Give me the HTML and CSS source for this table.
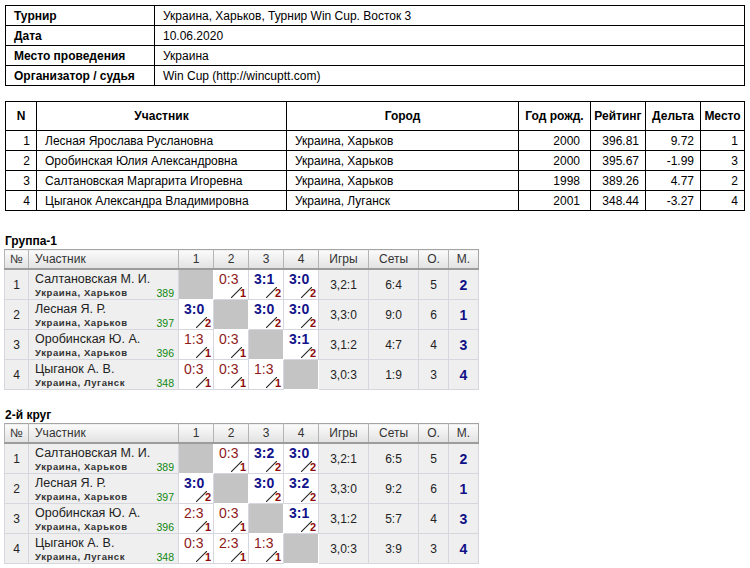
FILE: index.html
```html
<!DOCTYPE html>
<html lang="ru">
<head>
<meta charset="utf-8">
<title>Турнир Win Cup. Восток 3</title>
<link rel="stylesheet" href="styles.css">
</head>
<body>
<table class="info">
  <tr><th>Турнир</th><td>Украина, Харьков, Турнир Win Cup. Восток 3</td></tr>
  <tr><th>Дата</th><td>10.06.2020</td></tr>
  <tr><th>Место проведения</th><td>Украина</td></tr>
  <tr><th>Организатор / судья</th><td>Win Cup (http://wincuptt.com)</td></tr>
</table>

<table class="plist">
  <colgroup><col class="c-n"><col class="c-name"><col class="c-city"><col class="c-year"><col class="c-rt"><col class="c-dl"><col class="c-pl"></colgroup>
  <tr><th>N</th><th>Участник</th><th>Город</th><th>Год рожд.</th><th>Рейтинг</th><th>Дельта</th><th>Место</th></tr>
  <tr><td class="r">1</td><td>Лесная Ярослава Руслановна</td><td>Украина, Харьков</td><td class="r yr">2000</td><td class="r">396.81</td><td class="r">9.72</td><td class="r">1</td></tr>
  <tr><td class="r">2</td><td>Оробинская Юлия Александровна</td><td>Украина, Харьков</td><td class="r yr">2000</td><td class="r">395.67</td><td class="r">-1.99</td><td class="r">3</td></tr>
  <tr><td class="r">3</td><td>Салтановская Маргарита Игоревна</td><td>Украина, Харьков</td><td class="r yr">1998</td><td class="r">389.26</td><td class="r">4.77</td><td class="r">2</td></tr>
  <tr><td class="r">4</td><td>Цыганок Александра Владимировна</td><td>Украина, Луганск</td><td class="r yr">2001</td><td class="r">348.44</td><td class="r">-3.27</td><td class="r">4</td></tr>
</table>

<section class="group">
  <h3>Группа-1</h3>
  <table class="grid">
    <colgroup><col class="g-n"><col class="g-name"><col class="g-s"><col class="g-s"><col class="g-s"><col class="g-s"><col class="g-w"><col class="g-w"><col class="g-o"><col class="g-o"></colgroup>
    <tr class="hd"><th>№</th><th class="l">Участник</th><th>1</th><th>2</th><th>3</th><th>4</th><th>Игры</th><th>Сеты</th><th>О.</th><th>М.</th></tr>
    <tr>
      <td>1</td>
      <td class="nm"><div class="nmw"><span class="pn">Салтановская М. И.</span><span class="sub"><span class="ct">Украина, Харьков</span><span class="rt">389</span></span></div></td>
      <td class="x"></td>
      <td class="sc"><div class="scw"><span class="s lo">0:3</span><span class="pt"><svg viewBox="0 0 10 10"><line x1="0" y1="10" x2="10" y2="0"/></svg><b>1</b></span></div></td>
      <td class="sc"><div class="scw"><span class="s wn">3:1</span><span class="pt"><svg viewBox="0 0 10 10"><line x1="0" y1="10" x2="10" y2="0"/></svg><b>2</b></span></div></td>
      <td class="sc"><div class="scw"><span class="s wn">3:0</span><span class="pt"><svg viewBox="0 0 10 10"><line x1="0" y1="10" x2="10" y2="0"/></svg><b>2</b></span></div></td>
      <td>3,2:1</td><td>6:4</td><td>5</td><td class="pl">2</td>
    </tr>
    <tr>
      <td>2</td>
      <td class="nm"><div class="nmw"><span class="pn">Лесная Я. Р.</span><span class="sub"><span class="ct">Украина, Харьков</span><span class="rt">397</span></span></div></td>
      <td class="sc"><div class="scw"><span class="s wn">3:0</span><span class="pt"><svg viewBox="0 0 10 10"><line x1="0" y1="10" x2="10" y2="0"/></svg><b>2</b></span></div></td>
      <td class="x"></td>
      <td class="sc"><div class="scw"><span class="s wn">3:0</span><span class="pt"><svg viewBox="0 0 10 10"><line x1="0" y1="10" x2="10" y2="0"/></svg><b>2</b></span></div></td>
      <td class="sc"><div class="scw"><span class="s wn">3:0</span><span class="pt"><svg viewBox="0 0 10 10"><line x1="0" y1="10" x2="10" y2="0"/></svg><b>2</b></span></div></td>
      <td>3,3:0</td><td>9:0</td><td>6</td><td class="pl">1</td>
    </tr>
    <tr>
      <td>3</td>
      <td class="nm"><div class="nmw"><span class="pn">Оробинская Ю. А.</span><span class="sub"><span class="ct">Украина, Харьков</span><span class="rt">396</span></span></div></td>
      <td class="sc"><div class="scw"><span class="s lo">1:3</span><span class="pt"><svg viewBox="0 0 10 10"><line x1="0" y1="10" x2="10" y2="0"/></svg><b>1</b></span></div></td>
      <td class="sc"><div class="scw"><span class="s lo">0:3</span><span class="pt"><svg viewBox="0 0 10 10"><line x1="0" y1="10" x2="10" y2="0"/></svg><b>1</b></span></div></td>
      <td class="x"></td>
      <td class="sc"><div class="scw"><span class="s wn">3:1</span><span class="pt"><svg viewBox="0 0 10 10"><line x1="0" y1="10" x2="10" y2="0"/></svg><b>2</b></span></div></td>
      <td>3,1:2</td><td>4:7</td><td>4</td><td class="pl">3</td>
    </tr>
    <tr>
      <td>4</td>
      <td class="nm"><div class="nmw"><span class="pn">Цыганок А. В.</span><span class="sub"><span class="ct">Украина, Луганск</span><span class="rt">348</span></span></div></td>
      <td class="sc"><div class="scw"><span class="s lo">0:3</span><span class="pt"><svg viewBox="0 0 10 10"><line x1="0" y1="10" x2="10" y2="0"/></svg><b>1</b></span></div></td>
      <td class="sc"><div class="scw"><span class="s lo">0:3</span><span class="pt"><svg viewBox="0 0 10 10"><line x1="0" y1="10" x2="10" y2="0"/></svg><b>1</b></span></div></td>
      <td class="sc"><div class="scw"><span class="s lo">1:3</span><span class="pt"><svg viewBox="0 0 10 10"><line x1="0" y1="10" x2="10" y2="0"/></svg><b>1</b></span></div></td>
      <td class="x"></td>
      <td>3,0:3</td><td>1:9</td><td>3</td><td class="pl">4</td>
    </tr>
  </table>
</section>

<section class="group">
  <h3>2-й круг</h3>
  <table class="grid">
    <colgroup><col class="g-n"><col class="g-name"><col class="g-s"><col class="g-s"><col class="g-s"><col class="g-s"><col class="g-w"><col class="g-w"><col class="g-o"><col class="g-o"></colgroup>
    <tr class="hd"><th>№</th><th class="l">Участник</th><th>1</th><th>2</th><th>3</th><th>4</th><th>Игры</th><th>Сеты</th><th>О.</th><th>М.</th></tr>
    <tr>
      <td>1</td>
      <td class="nm"><div class="nmw"><span class="pn">Салтановская М. И.</span><span class="sub"><span class="ct">Украина, Харьков</span><span class="rt">389</span></span></div></td>
      <td class="x"></td>
      <td class="sc"><div class="scw"><span class="s lo">0:3</span><span class="pt"><svg viewBox="0 0 10 10"><line x1="0" y1="10" x2="10" y2="0"/></svg><b>1</b></span></div></td>
      <td class="sc"><div class="scw"><span class="s wn">3:2</span><span class="pt"><svg viewBox="0 0 10 10"><line x1="0" y1="10" x2="10" y2="0"/></svg><b>2</b></span></div></td>
      <td class="sc"><div class="scw"><span class="s wn">3:0</span><span class="pt"><svg viewBox="0 0 10 10"><line x1="0" y1="10" x2="10" y2="0"/></svg><b>2</b></span></div></td>
      <td>3,2:1</td><td>6:5</td><td>5</td><td class="pl">2</td>
    </tr>
    <tr>
      <td>2</td>
      <td class="nm"><div class="nmw"><span class="pn">Лесная Я. Р.</span><span class="sub"><span class="ct">Украина, Харьков</span><span class="rt">397</span></span></div></td>
      <td class="sc"><div class="scw"><span class="s wn">3:0</span><span class="pt"><svg viewBox="0 0 10 10"><line x1="0" y1="10" x2="10" y2="0"/></svg><b>2</b></span></div></td>
      <td class="x"></td>
      <td class="sc"><div class="scw"><span class="s wn">3:0</span><span class="pt"><svg viewBox="0 0 10 10"><line x1="0" y1="10" x2="10" y2="0"/></svg><b>2</b></span></div></td>
      <td class="sc"><div class="scw"><span class="s wn">3:2</span><span class="pt"><svg viewBox="0 0 10 10"><line x1="0" y1="10" x2="10" y2="0"/></svg><b>2</b></span></div></td>
      <td>3,3:0</td><td>9:2</td><td>6</td><td class="pl">1</td>
    </tr>
    <tr>
      <td>3</td>
      <td class="nm"><div class="nmw"><span class="pn">Оробинская Ю. А.</span><span class="sub"><span class="ct">Украина, Харьков</span><span class="rt">396</span></span></div></td>
      <td class="sc"><div class="scw"><span class="s lo">2:3</span><span class="pt"><svg viewBox="0 0 10 10"><line x1="0" y1="10" x2="10" y2="0"/></svg><b>1</b></span></div></td>
      <td class="sc"><div class="scw"><span class="s lo">0:3</span><span class="pt"><svg viewBox="0 0 10 10"><line x1="0" y1="10" x2="10" y2="0"/></svg><b>1</b></span></div></td>
      <td class="x"></td>
      <td class="sc"><div class="scw"><span class="s wn">3:1</span><span class="pt"><svg viewBox="0 0 10 10"><line x1="0" y1="10" x2="10" y2="0"/></svg><b>2</b></span></div></td>
      <td>3,1:2</td><td>5:7</td><td>4</td><td class="pl">3</td>
    </tr>
    <tr>
      <td>4</td>
      <td class="nm"><div class="nmw"><span class="pn">Цыганок А. В.</span><span class="sub"><span class="ct">Украина, Луганск</span><span class="rt">348</span></span></div></td>
      <td class="sc"><div class="scw"><span class="s lo">0:3</span><span class="pt"><svg viewBox="0 0 10 10"><line x1="0" y1="10" x2="10" y2="0"/></svg><b>1</b></span></div></td>
      <td class="sc"><div class="scw"><span class="s lo">2:3</span><span class="pt"><svg viewBox="0 0 10 10"><line x1="0" y1="10" x2="10" y2="0"/></svg><b>1</b></span></div></td>
      <td class="sc"><div class="scw"><span class="s lo">1:3</span><span class="pt"><svg viewBox="0 0 10 10"><line x1="0" y1="10" x2="10" y2="0"/></svg><b>1</b></span></div></td>
      <td class="x"></td>
      <td>3,0:3</td><td>3:9</td><td>3</td><td class="pl">4</td>
    </tr>
  </table>
</section>
</body>
</html>
```

FILE: styles.css
```css
html, body {
  margin: 0;
  padding: 0;
  background: #fff;
}
body {
  padding: 5px 5px 0 5px;
  font-family: "Liberation Sans", Arial, sans-serif;
  font-size: 12px;
  color: #000;
}
table {
  border-collapse: collapse;
}
.info {
  width: 740px;
  margin-bottom: 15px;
}
.info th, .info td {
  border: 1px solid #000;
  height: 19px;
  padding: 0 6px 0 8px;
  text-align: left;
  white-space: nowrap;
}
.info th {
  width: 134px;
  font-weight: bold;
}
.plist {
  width: 740px;
}
.plist th, .plist td {
  border: 1px solid #000;
  padding: 0 8px;
  white-space: nowrap;
}
.plist th {
  height: 28px;
  font-weight: bold;
  text-align: center;
  padding: 0 3px;
}
.plist td {
  height: 19px;
}
.plist td.r {
  text-align: right;
  padding-right: 6px;
}
.plist td.yr {
  padding-right: 10px;
}
.c-n { width: 31px; }
.c-name { width: 250px; }
.c-city { width: 232px; }
.c-year { width: 72px; }
.c-rt { width: 55px; }
.c-dl { width: 55px; }
.c-pl { width: 44px; }

.group {
  margin-left: -1px;
}
.group h3 {
  margin: 23px 0 1px 1px;
  font-size: 12px;
  font-weight: bold;
  line-height: 14px;
}
.group + .group h3 {
  margin-top: 18px;
}
.grid {
  width: 474px;
  table-layout: fixed;
  border: 1px solid #a4a4a4;
  color: #222;
}
.g-n { width: 24px; }
.g-name { width: 150px; }
.g-s { width: 35px; }
.g-w { width: 50px; }
.g-o { width: 30px; }
.grid th {
  height: 18px;
  padding: 0;
  font-weight: normal;
  font-size: 12px;
  color: #333;
  background: linear-gradient(#fbfbfb, #e2e2e2);
  border-left: 1px solid #b4b4b4;
  border-bottom: 2px solid #9c9c9c;
  text-align: center;
}
.grid th.l {
  text-align: left;
  padding-left: 6px;
}
.grid td {
  height: 29px;
  padding: 0;
  background: #efefef;
  border: 1px solid #d6d6de;
  text-align: center;
  font-size: 12px;
  color: #222;
}
.grid td.x {
  background: #c4c4c4;
  border-color: #fff;
}
.grid td.sc {
  background: #fff;
}
.grid td.pl {
  font-weight: bold;
  font-size: 14px;
  color: #101086;
}
.grid td.nm {
  text-align: left;
}
.nmw {
  display: flex;
  flex-direction: column;
  justify-content: space-between;
  height: 29px;
  padding: 2px 4px 0 6px;
  box-sizing: border-box;
}
.pn {
  font-size: 12.5px;
  line-height: 15px;
  color: #222;
}
.sub {
  display: flex;
  justify-content: space-between;
  align-items: flex-end;
  line-height: 12px;
}
.ct {
  font-size: 9.5px;
  font-weight: bold;
  letter-spacing: 0.6px;
  color: #333;
}
.rt {
  font-size: 10.5px;
  color: #108810;
}
.scw {
  display: flex;
  flex-direction: column;
  height: 29px;
  padding: 2px 2px 0 5px;
  box-sizing: border-box;
}
.s {
  align-self: flex-start;
  font-size: 14px;
  line-height: 15px;
}
.s.lo {
  color: #8e1a1a;
}
.s.wn {
  color: #12128a;
  font-weight: bold;
}
.pt {
  margin-top: auto;
  align-self: flex-end;
  display: flex;
  align-items: flex-end;
}
.pt svg {
  width: 11px;
  height: 11px;
  margin-bottom: 1px;
}
.pt svg line {
  stroke: #222;
  stroke-width: 1;
}
.pt b {
  font-size: 11px;
  line-height: 11px;
  color: #8e0c0c;
  margin-left: -2px;
}
```
